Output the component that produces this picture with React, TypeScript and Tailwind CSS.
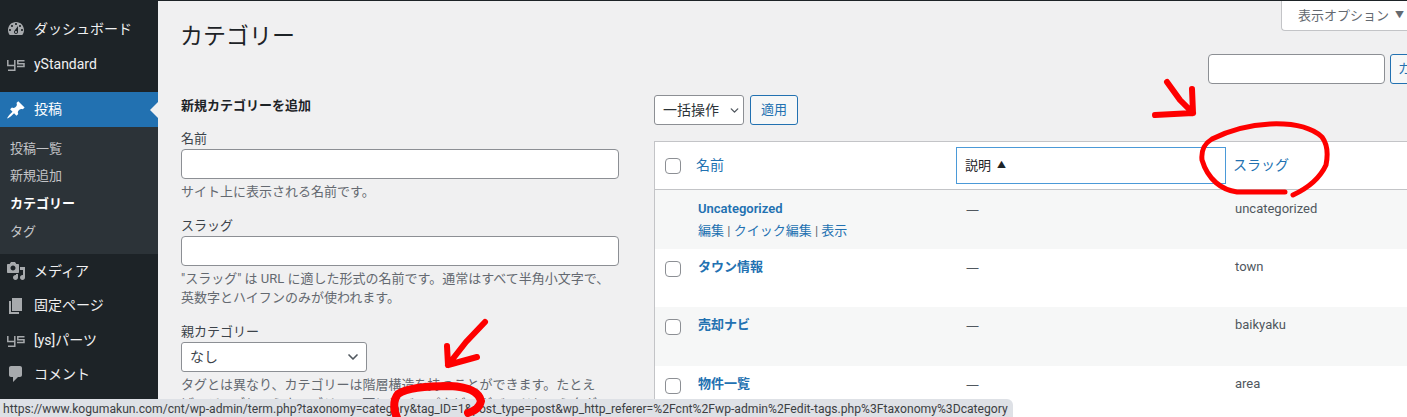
import { ChevronDown } from "lucide-react";

const font = { fontFamily: 'Roboto, "Noto Sans CJK JP", sans-serif' };

const icons = {
  dashboard:
    "M3.76 16h12.48c1.1-1.37 1.76-3.11 1.76-5 0-4.42-3.58-8-8-8s-8 3.58-8 8c0 1.89.66 3.63 1.76 5zM10 4c.55 0 1 .45 1 1s-.45 1-1 1-1-.45-1-1 .45-1 1-1zM6 6c.55 0 1 .45 1 1s-.45 1-1 1-1-.45-1-1 .45-1 1-1zm8 0c.55 0 1 .45 1 1s-.45 1-1 1-1-.45-1-1 .45-1 1-1zm-5.37 5.55L12 7v6c0 1.1-.9 2-2 2s-2-.9-2-2c0-.57.24-1.08.63-1.45zM4 10c.55 0 1 .45 1 1s-.45 1-1 1-1-.45-1-1 .45-1 1-1zm12 0c.55 0 1 .45 1 1s-.45 1-1 1-1-.45-1-1 .45-1 1-1zm-5 3c0-.55-.45-1-1-1s-1 .45-1 1 .45 1 1 1 1-.45 1-1z",
  post: "M10.44 3.02l1.82-1.82 6.36 6.35-1.83 1.82c-1.05-.68-2.48-.57-3.41.36l-.75.75c-.92.93-1.04 2.35-.35 3.41l-1.83 1.82-2.41-2.41-2.8 2.79c-.42.42-3.38 2.71-3.8 2.29s1.86-3.39 2.28-3.81l2.79-2.79L4.1 9.36l1.83-1.82c1.05.69 2.48.57 3.4-.36l.75-.75c.93-.92 1.05-2.35.36-3.41z",
  media:
    "M13 11V4c0-.55-.45-1-1-1h-1.67L9 1H5L3.67 3H2c-.55 0-1 .45-1 1v7c0 .55.45 1 1 1h10c.55 0 1-.45 1-1zM7 4.5c1.38 0 2.5 1.12 2.5 2.5S8.38 9.5 7 9.5 4.5 8.38 4.5 7 5.62 4.5 7 4.5zM14 6h5v10.5c0 1.38-1.12 2.5-2.5 2.5S14 17.88 14 16.5s1.12-2.5 2.5-2.5c.17 0 .34.02.5.05V9h-3V6zm-4 8.05V13h2v3.5c0 1.38-1.12 2.5-2.5 2.5S7 17.88 7 16.5 8.12 14 9.5 14c.17 0 .34.02.5.05z",
  page: "M6 15V2h10v13H6zm-1 1h8v2H3V5h2v11z",
  comments:
    "M5 2h9c1.1 0 2 .9 2 2v7c0 1.1-.9 2-2 2h-2l-5 5v-5H5c-1.1 0-2-.9-2-2V4c0-1.1.9-2 2-2z",
};

function DashIcon({ d, white }: { d: string; white?: boolean }) {
  return (
    <svg viewBox="0 0 20 20" className={white ? "w-5 h-5 fill-white" : "w-5 h-5 fill-[#a7aaad]"}>
      <path d={d} />
    </svg>
  );
}

function YsLogo() {
  return (
    <svg viewBox="0 0 18 11" className="w-[18px] h-[11px] mt-[3px] fill-none stroke-[#a7aaad] stroke-[1.5]">
      <path d="M.8 0v5.5h7M7.8 0v10.2H1" />
      <path d="M17.5 .8H10.8v2.9h6.2v2.9H10" />
    </svg>
  );
}

function MenuItem({ icon, label, className }: { icon: React.ReactNode; label: string; className: string }) {
  return (
    <div className={`flex items-center text-[14px] text-[#f0f0f1] ${className}`}>
      <div className="w-[34px] flex justify-center pr-[2px]">{icon}</div>
      <span>{label}</span>
    </div>
  );
}

function Sidebar() {
  return (
    <div className="w-[158px] shrink-0 bg-[#1d2327] pt-[12px] flex flex-col">
      <MenuItem className="h-[34px]" icon={<DashIcon d={icons.dashboard} />} label="ダッシュボード" />
      <MenuItem className="h-[36px]" icon={<YsLogo />} label="yStandard" />
      <div className="h-[10px]" />
      <div className="relative flex items-center h-[35px] bg-[#2271b1] text-[14px] text-white">
        <div className="w-[34px] flex justify-center pr-[2px]">
          <DashIcon d={icons.post} white />
        </div>
        <span>投稿</span>
        <div className="absolute right-0 top-[10px] border-y-[8px] border-r-[8px] border-y-transparent border-r-[#f0f0f1]" />
      </div>
      <div className="bg-[#2c3338] h-[127px] pt-[8px] pl-[10px] text-[13px] text-[#c3c4c7] flex flex-col">
        <div className="h-[27px] leading-[28px]">投稿一覧</div>
        <div className="h-[28px] leading-[28px]">新規追加</div>
        <div className="h-[28px] leading-[27px] font-semibold text-white">カテゴリー</div>
        <div className="h-[28px] leading-[28px]">タグ</div>
      </div>
      <MenuItem className="h-[34px]" icon={<DashIcon d={icons.media} />} label="メディア" />
      <MenuItem className="h-[35px]" icon={<DashIcon d={icons.page} />} label="固定ページ" />
      <MenuItem className="h-[34px]" icon={<YsLogo />} label="[ys]パーツ" />
      <MenuItem className="h-[34px]" icon={<DashIcon d={icons.comments} />} label="コメント" />
    </div>
  );
}

function TextInput({ className }: { className: string }) {
  return <div className={`h-[30px] shrink-0 bg-white border border-[#8c8f94] rounded-[4px] ${className}`} />;
}

function AddForm() {
  return (
    <div className="w-[438px] shrink-0 pt-[42px] text-[13px] text-[#3c434a]">
      <h2 className="font-semibold text-[13px] leading-[20px] text-[#1d2327]">新規カテゴリーを追加</h2>
      <div className="mt-[13px] leading-[20px]">名前</div>
      <TextInput className="w-full" />
      <p className="mt-[3px] leading-[20px] text-[#646970]">サイト上に表示される名前です。</p>
      <div className="mt-[14px] leading-[20px]">スラッグ</div>
      <TextInput className="w-full" />
      <p className="mt-[4px] leading-[18.5px] text-[#646970]">
        "スラッグ" は URL に適した形式の名前です。通常はすべて半角小文字で、
        <br />
        英数字とハイフンのみが使われます。
      </p>
      <div className="mt-[15px] leading-[20px]">親カテゴリー</div>
      <div className="w-[186px] h-[30px] bg-white border border-[#8c8f94] rounded-[3px] flex items-center justify-between pl-[8px] pr-[5px] text-[14px]">
        <span>なし</span>
        <ChevronDown size={16} strokeWidth={2.5} className="text-[#50575e]" />
      </div>
      <p className="mt-[3px] leading-[19px] text-[#646970] whitespace-nowrap">
        タグとは異なり、カテゴリーは階層構造を持つことができます。たとえ
        <br />
        ば、ジャズというカテゴリーの下にビバップやビッグバンドというタグ
      </p>
    </div>
  );
}

function Checkbox() {
  return <div className="w-[16px] h-[16px] bg-white border border-[#8c8f94] rounded-[4px] shrink-0" />;
}

function Row({
  name,
  slug,
  tall,
  odd,
  actions,
}: {
  name: string;
  slug: string;
  tall: string;
  odd?: boolean;
  actions?: boolean;
}) {
  return (
    <div className={`flex ${tall} ${odd ? "bg-[#f6f7f7]" : "bg-white"} ${actions ? "pt-[9px]" : "pt-[8px]"} text-[13px] leading-[20px] text-[#50575e]`}>
      <div className="w-[43px] pl-[10px] pt-[4px]">{!actions && <Checkbox />}</div>
      <div className="w-[258px]">
        <div className="font-semibold text-[#2271b1]">{name}</div>
        {actions && (
          <div className="mt-[2px] text-[#2271b1] whitespace-nowrap">
            編集 <span className="text-[#646970]">|</span> クイック編集 <span className="text-[#646970]">|</span> 表示
          </div>
        )}
      </div>
      <div className="w-[270px] pl-[10px] font-['Noto_Sans']">—</div>
      <div className="pl-[9px]">{slug}</div>
    </div>
  );
}

function CategoryList() {
  return (
    <div className="w-[800px] shrink-0 text-[13px]">
      <div className="flex ml-[554px] gap-[5px]">
        <TextInput className="w-[177px]" />
        <div className="w-[80px] h-[30px] shrink-0 border border-[#2271b1] bg-[#f6f7f7] rounded-[3px] text-[#2271b1] leading-[28px] pl-[7px] whitespace-nowrap overflow-hidden">
          カテゴリーを検索
        </div>
      </div>
      <div className="flex gap-[6px] mt-[11px]">
        <div className="w-[90px] h-[30px] bg-white border border-[#8c8f94] rounded-[3px] flex items-center justify-between pl-[8px] pr-[2px] text-[14px] text-[#2c3338]">
          <span>一括操作</span>
          <ChevronDown size={13} strokeWidth={2.5} className="text-[#50575e]" />
        </div>
        <div className="w-[48px] h-[30px] bg-[#f6f7f7] border border-[#2271b1] rounded-[3px] text-[#2271b1] text-center leading-[28px]">
          適用
        </div>
      </div>
      <div className="mt-[16px] border-l border-t border-[#c3c4c7]">
        <div className="flex items-center h-[48px] bg-white border-b border-[#c3c4c7] text-[14px]">
          <div className="w-[41px] pl-[10px]">
            <Checkbox />
          </div>
          <div className="w-[260px] text-[#2271b1]">名前</div>
          <div className="w-[270px] h-[37px] pl-[8px] flex items-center gap-[6px] bg-white border border-[#4b9ad8] text-[#1d2327] text-[13px]">
            説明 <span className="text-[9px]">▲</span>
          </div>
          <div className="pl-[7px] text-[#2271b1]">スラッグ</div>
        </div>
        <Row name="Uncategorized" slug="uncategorized" tall="h-[59px]" odd actions />
        <Row name="タウン情報" slug="town" tall="h-[58px]" />
        <Row name="売却ナビ" slug="baikyaku" tall="h-[59px]" odd />
        <Row name="物件一覧" slug="area" tall="h-[59px]" />
      </div>
    </div>
  );
}

function Annotations() {
  return (
    <svg className="absolute inset-0 pointer-events-none" width="1407" height="417" fill="none" stroke="#fe0000" strokeWidth="5" strokeLinecap="round" strokeLinejoin="round">
      <path d="M485 322L466 342L448 365M447 346L448 365L477 357" strokeWidth="6" />
      <path d="M398 420C393 410 393 400 398 394C408 387 430 386 450 386C470 387 479 392 481 401C480 407 475 411 468 413" strokeWidth="8" />
      <path d="M1167 82L1180 100L1193 113M1192 89L1193 113L1155 115" strokeWidth="6" />
      <path d="M1285 192L1237 192C1222 190 1208 180 1202 160C1201 150 1204 144 1212 139C1228 131 1250 125 1270 124C1295 123 1312 128 1322 137C1328 145 1328 155 1326 165C1320 178 1308 188 1293 195" strokeWidth="5" />
    </svg>
  );
}

export default function App() {
  return (
    <div className="relative w-[1407px] h-[417px] overflow-hidden flex bg-[#f0f0f1]" style={font}>
      <Sidebar />
      <div className="flex-1 min-w-0 border-t border-[#1d2327]">
        <div className="flex items-start justify-between h-[53px]">
          <h1 className="ml-[22px] mt-[20px] text-[23px] leading-[32px] text-[#1d2327]">カテゴリー</h1>
          <div className="flex items-center gap-[6px] w-[126px] h-[30px] bg-white border-l border-b border-[#c3c4c7] rounded-bl-[4px] pl-[16px] text-[13px] text-[#646970] whitespace-nowrap">
            <span>表示オプション</span>
            <span className="text-[9px]">▼</span>
          </div>
        </div>
        <div className="flex ml-[23px] gap-[35px]">
          <AddForm />
          <CategoryList />
        </div>
      </div>
      <div className="absolute left-0 bottom-0 w-[1013px] h-[18px] bg-[#dee1e6] rounded-tr-[6px] pl-[3px] text-[12.15px] leading-[21px] text-[#3c4043] whitespace-nowrap overflow-hidden">
        https://www.kogumakun.com/cnt/wp-admin/term.php?taxonomy=category&amp;tag_ID=1&amp;post_type=post&amp;wp_http_referer=%2Fcnt%2Fwp-admin%2Fedit-tags.php%3Ftaxonomy%3Dcategory
      </div>
      <Annotations />
    </div>
  );
}
